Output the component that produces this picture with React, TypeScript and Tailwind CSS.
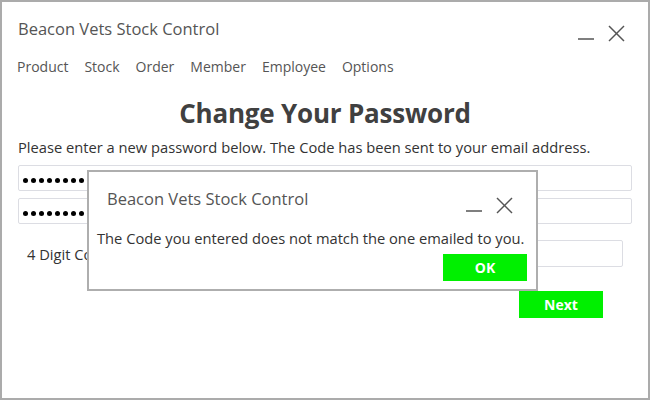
import React from "react";

function WinButtons() {
  return (
    <div className="flex items-end gap-[14px]">
      <svg width="16" height="16" viewBox="0 0 16 16">
        <line x1="0" y1="13" x2="16" y2="13" stroke="#555" strokeWidth="1.5" />
      </svg>
      <svg width="17" height="17" viewBox="0 0 17 17">
        <line x1="1" y1="1" x2="16" y2="16" stroke="#555" strokeWidth="1.5" />
        <line x1="16" y1="1" x2="1" y2="16" stroke="#555" strokeWidth="1.5" />
      </svg>
    </div>
  );
}

function Dots() {
  return (
    <div className="h-[26px] w-full rounded-[2px] border border-[#dcdde3] pl-[4px] pt-[4px] flex items-center gap-[3px] overflow-hidden">
      {Array.from({ length: 12 }).map((_, i) => (
        <span key={i} className="w-[5px] h-[5px] rounded-full bg-black shrink-0" />
      ))}
    </div>
  );
}

export default function App() {
  const font = { fontFamily: '"Open Sans", "Noto Sans", sans-serif' };
  return (
    <div
      className="relative w-[650px] h-[400px] border-2 border-[#ababab] bg-white text-[#444] overflow-hidden"
      style={font}
    >
      <div className="flex items-start justify-between pl-4 pr-[23px] pt-[16px]">
        <div className="text-[16.5px] leading-[22px] text-[#555]">Beacon Vets Stock Control</div>
        <div className="mt-[7px]">
          <WinButtons />
        </div>
      </div>
      <div className="flex gap-[16px] pl-[15px] mt-[15px] text-[14px] leading-[20px] text-[#555]">
        <span>Product</span>
        <span>Stock</span>
        <span>Order</span>
        <span>Member</span>
        <span>Employee</span>
        <span>Options</span>
      </div>
      <h1 className="mt-[19px] text-center text-[26px] leading-[34px] font-bold text-[#404040] tracking-[-0.2px]">
        Change Your Password
      </h1>
      <p className="pl-4 mt-[7px] text-[14.7px] leading-[20px] text-[#333]">
        Please enter a new password below. The Code has been sent to your email address.
      </p>
      <div className="px-4 mt-[8px] flex flex-col gap-[7px]">
        <Dots />
        <Dots />
      </div>
      <div className="flex items-center justify-between pl-[25px] pr-[25px] mt-[16px]">
        <span className="text-[14.7px] leading-[20px] text-[#333]">4 Digit Code</span>
        <div className="h-[27px] w-[224px] rounded-[2px] border border-[#dcdde3]" />
      </div>
      <div className="flex justify-end pr-[45px] mt-[24px]">
        <div className="w-[84px] h-[27px] bg-[#00f000] text-white font-bold text-[14px] flex items-center justify-center">
          Next
        </div>
      </div>

      <div className="absolute left-[85px] top-[168px] w-[451px] h-[121px] border-2 border-[#aeaeae] bg-white">
        <div className="flex items-start justify-between pl-[18px] pr-[23px] pt-[16px]">
          <div className="text-[16.5px] leading-[22px] text-[#555]">Beacon Vets Stock Control</div>
          <div className="mt-[9px]">
            <WinButtons />
          </div>
        </div>
        <div className="pl-[8px] mt-[14px] text-[14.7px] leading-[20px] text-[#333]">
          The Code you entered does not match the one emailed to you.
        </div>
        <div className="flex justify-end pr-[9px] mt-[6px]">
          <div className="w-[84px] h-[27px] bg-[#00f000] text-white font-bold text-[14px] flex items-center justify-center">
            OK
          </div>
        </div>
      </div>
    </div>
  );
}
